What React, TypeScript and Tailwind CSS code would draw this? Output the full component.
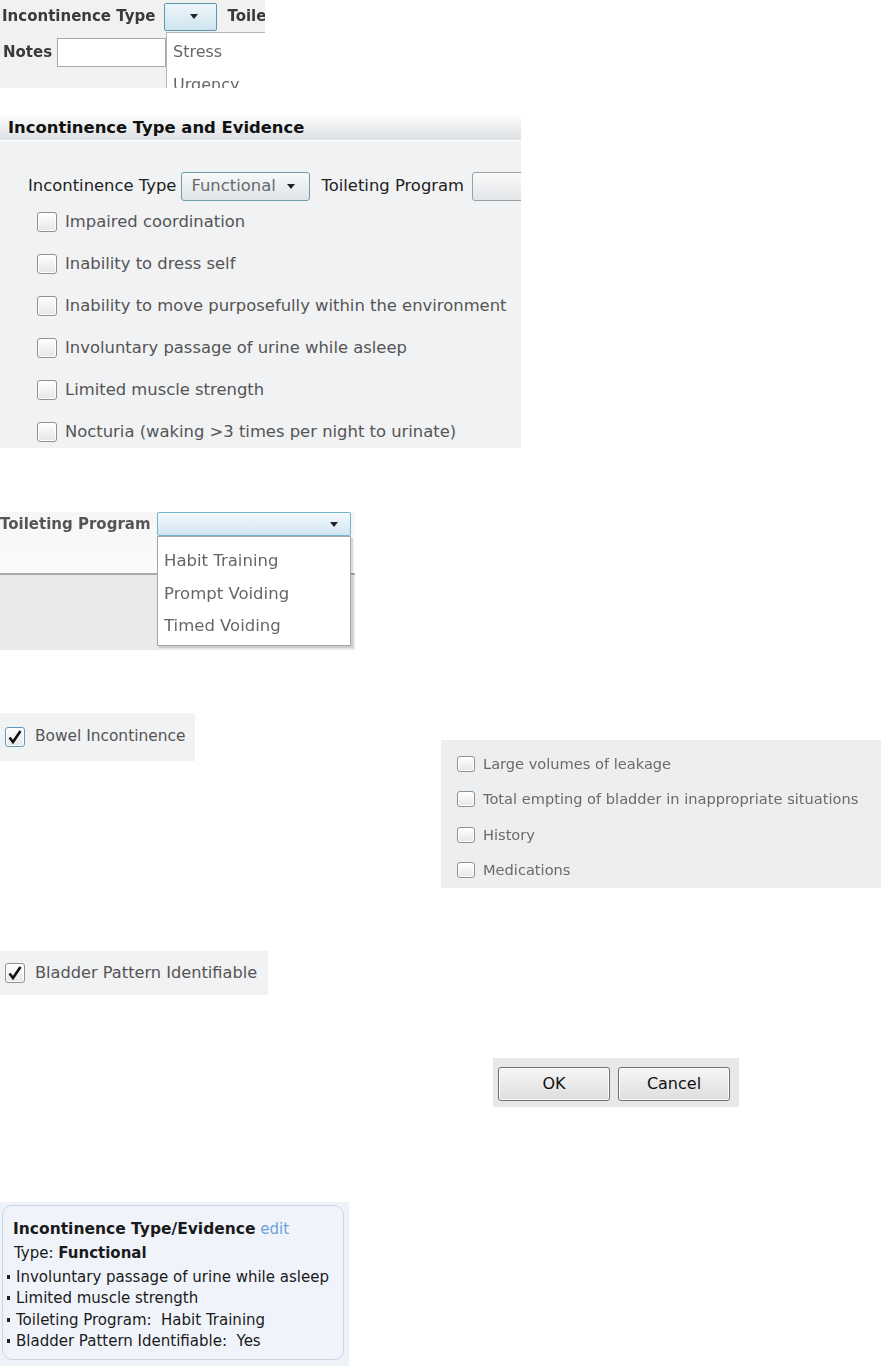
import React from 'react';

type BoxProps = { checked?: boolean; focus?: boolean; small?: boolean };

function CheckBox({ checked, focus, small }: BoxProps) {
  return (
    <span
      className={[
        'flex shrink-0 items-center justify-center rounded-[3px] border bg-linear-to-b from-white to-[#e4e6e8] shadow-[inset_0_0_0_1px_#fff]',
        small ? 'h-[16px] w-[18px]' : 'h-[20px] w-[20px]',
        focus ? 'border-[#5d9bb8] shadow-[0_0_0_1px_#a9d3e6]' : 'border-[#8e9194]',
      ].join(' ')}
    >
      {checked ? (
        <svg width="16" height="16" viewBox="0 0 16 16">
          <path d="M2.5 8.5 L6 13 L13.5 2" fill="none" stroke="#111" strokeWidth="2.6" strokeLinejoin="miter" />
        </svg>
      ) : null}
    </span>
  );
}

function Arrow() {
  return (
    <svg width="8" height="5" viewBox="0 0 8 5">
      <path d="M0 0 L8 0 L4 5 Z" fill="#222" />
    </svg>
  );
}

const evidence = [
  'Impaired coordination',
  'Inability to dress self',
  'Inability to move purposefully within the environment',
  'Involuntary passage of urine while asleep',
  'Limited muscle strength',
  'Nocturia (waking >3 times per night to urinate)',
];

const stressItems = [
  'Large volumes of leakage',
  'Total empting of bladder in inappropriate situations',
  'History',
  'Medications',
];

const summary = [
  'Involuntary passage of urine while asleep',
  'Limited muscle strength',
  'Toileting Program:  Habit Training',
  'Bladder Pattern Identifiable:  Yes',
];

export default function App() {
  return (
    <div className="flex h-[1366px] w-[881px] flex-col overflow-hidden bg-white font-['DejaVu_Sans',sans-serif]">
      {/* snippet: type dropdown open */}
      <div className="relative h-[88px] w-[265px] overflow-hidden bg-[#f1f1f1] blur-[0.3px]">
        <div className="flex h-[33px] items-center whitespace-nowrap pl-[2px] text-[15px] font-bold text-[#3a3a3a]">
          <span>Incontinence Type</span>
          <span className="ml-[9px] flex h-[28px] w-[53px] shrink-0 items-center justify-center rounded-[2px] border border-[#5b98ae] bg-linear-to-b from-[#eef6fb] to-[#cfe4f0] pl-[6px]">
            <Arrow />
          </span>
          <span className="ml-[10px]">Toileting</span>
        </div>
        <div className="flex items-center pl-[3px] pt-[5px] text-[15px] font-bold text-[#3a3a3a]">
          <span>Notes</span>
          <span className="ml-[5px] h-[29px] w-[109px] border border-[#a8a8a8] bg-white" />
        </div>
        <div className="absolute left-[166px] top-[32px] flex h-[70px] w-[110px] flex-col border border-[#b5b5b5] bg-white pl-[6px] text-[16px] leading-[20px] text-[#666]">
          <span className="mt-[9px]">Stress</span>
          <span className="mt-[13px]">Urgency</span>
        </div>
      </div>

      {/* snippet: full panel */}
      <div className="mt-[28px] h-[332px] w-[521px] overflow-hidden bg-[#f1f2f4]">
        <div className="flex h-[25px] items-center border-b border-white bg-linear-to-b from-[#fbfbfb] to-[#dde0e3] pl-[8px] text-[16.4px] font-bold text-[#111]">
          Incontinence Type and Evidence
        </div>
        <div className="mt-[31px] flex h-[29px] items-center whitespace-nowrap pl-[28px] text-[16.4px] text-[#222]">
          <span>Incontinence Type</span>
          <span className="ml-[5px] flex h-[29px] w-[129px] shrink-0 items-center justify-between rounded-[3px] border border-[#6e9cad] bg-linear-to-b from-[#f7f9fa] to-[#dfe4e8] pl-[9px] pr-[14px] text-[#6a6a6a]">
            Functional
            <Arrow />
          </span>
          <span className="ml-[11px]">Toileting Program</span>
          <span className="ml-[8px] h-[29px] w-[120px] shrink-0 rounded-[3px] border border-[#9aa1a6] bg-linear-to-b from-[#fafafa] to-[#e2e5e8]" />
        </div>
        <div className="flex flex-col pl-[37px]">
          {evidence.map((t) => (
            <div key={t} className="flex h-[42px] items-center gap-[8px] whitespace-nowrap text-[16.4px] text-[#555]">
              <CheckBox />
              <span>{t}</span>
            </div>
          ))}
        </div>
      </div>

      {/* snippet: toileting dropdown open */}
      <div className="relative mt-[64px] h-[138px] w-[355px] overflow-hidden bg-[#e9eaeb] blur-[0.3px]">
        <div className="h-[63px] w-full border-b-2 border-[#a9a9a9] bg-linear-to-b from-[#f6f6f6] to-[#fbfbfb]">
          <div className="flex h-[24px] items-center whitespace-nowrap text-[15px] font-bold text-[#555]">
            <span className="w-[157px] shrink-0">Toileting Program</span>
            <span className="flex h-[24px] w-[194px] shrink-0 items-center justify-end rounded-[2px] border border-[#72b3cd] bg-linear-to-b from-[#f4f9fc] to-[#d2e6f3] pr-[12px]">
              <Arrow />
            </span>
          </div>
        </div>
        <div className="absolute left-[157px] top-[24px] flex h-[110px] w-[194px] flex-col border border-[#a6a6a6] bg-white pl-[6px] text-[16.5px] text-[#666] shadow-[2px_2px_1px_rgba(0,0,0,0.12)]">
          <span className="mt-[15px] leading-[18px]">Habit Training</span>
          <span className="mt-[15px] leading-[18px]">Prompt Voiding</span>
          <span className="mt-[14px] leading-[18px]">Timed Voiding</span>
        </div>
      </div>

      {/* row: bowel + stress evidence */}
      <div className="mt-[63px] flex items-start">
        <div className="flex h-[48px] w-[195px] shrink-0 items-center gap-[10px] whitespace-nowrap bg-[#f1f2f4] pl-[5px] text-[15.4px] text-[#555]">
          <CheckBox checked focus />
          <span>Bowel Incontinence</span>
        </div>
        <div className="ml-[246px] mt-[27px] flex h-[148px] w-[440px] flex-col overflow-hidden bg-[#eceef0] pl-[16px] pt-[6px] blur-[0.3px]">
          {stressItems.map((t) => (
            <div key={t} className="flex h-[36.5px] items-center gap-[8px] whitespace-nowrap text-[14.6px] text-[#6a6a6a]">
              <CheckBox small />
              <span>{t}</span>
            </div>
          ))}
        </div>
      </div>

      {/* snippet: bladder pattern */}
      <div className="mt-[63px] flex h-[44px] w-[268px] items-center gap-[10px] whitespace-nowrap bg-[#f1f2f4] pl-[5px] text-[16.2px] text-[#555]">
        <CheckBox checked />
        <span>Bladder Pattern Identifiable</span>
      </div>

      {/* snippet: buttons */}
      <div className="ml-[493px] mt-[63px] flex h-[49px] w-[246px] items-start gap-[8px] bg-[#e6e8ea] pl-[5px] pt-[9px]">
        {['OK', 'Cancel'].map((b) => (
          <button
            key={b}
            type="button"
            className="flex h-[34px] w-[112px] items-center justify-center rounded-[3px] border border-[#707070] bg-linear-to-b from-[#f6f6f6] to-[#dedede] text-[16px] text-[#111] shadow-[inset_0_0_0_1px_#fcfcfc]"
          >
            {b}
          </button>
        ))}
      </div>

      {/* snippet: summary card */}
      <div className="mt-[95px] h-[164px] w-[349px] bg-[#eef3fa] pl-[2px] pt-[3px]">
        <div className="h-[155px] w-[342px] rounded-[10px] border border-[#cbd6e3] bg-[#f0f4fa] pt-[13px] text-[15px] text-[#1a1a1a]">
          <div className="whitespace-nowrap pl-[10px] leading-[20px]">
            <span className="text-[15.5px] font-bold">Incontinence Type/Evidence</span>{' '}
            <span className="text-[#6aa2d8]">edit</span>
          </div>
          <div className="mt-[4px] pl-[11px] leading-[20px]">
            Type: <span className="font-bold">Functional</span>
          </div>
          <div className="mt-[3px] flex flex-col">
            {summary.map((s) => (
              <div key={s} className="flex h-[21.5px] items-center whitespace-pre pl-[4px]">
                <span className="mr-[6px] h-[4px] w-[3px] shrink-0 bg-[#222]" />
                <span>{s}</span>
              </div>
            ))}
          </div>
        </div>
      </div>
    </div>
  );
}
